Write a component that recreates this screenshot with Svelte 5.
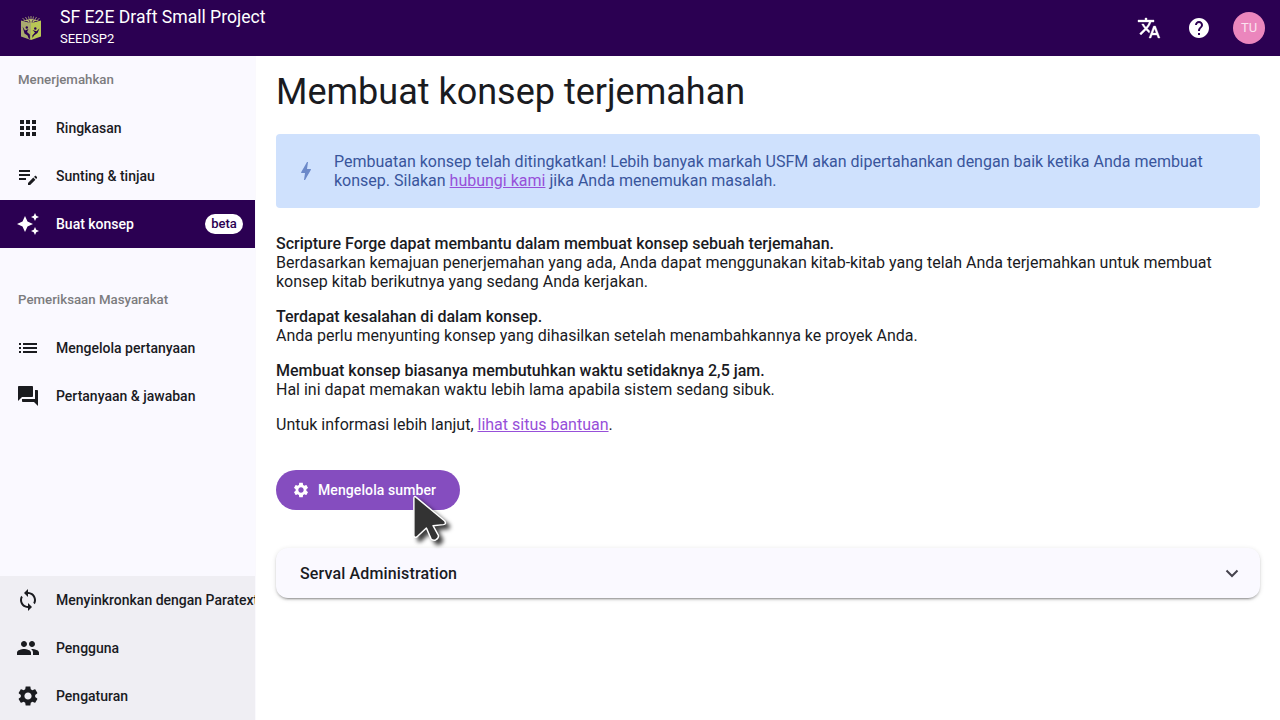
<script>
  const icons = {
    apps: 'M4 8h4V4H4v4zm6 12h4v-4h-4v4zm-6 0h4v-4H4v4zm0-6h4v-4H4v4zm6 0h4v-4h-4v4zm6-10v4h4V4h-4zm-6 4h4V4h-4v4zm6 6h4v-4h-4v4zm0 6h4v-4h-4v4z',
    editNote: 'M3 10h11v2H3v-2zm0-2h11V6H3v2zm0 8h7v-2H3v2zm15.01-3.13.71-.71c.39-.39 1.02-.39 1.41 0l.71.71c.39.39.39 1.02 0 1.41l-.71.71-2.12-2.12zm-.71.71-5.3 5.3V21h2.12l5.3-5.3-2.12-2.12z',
    sparkle: 'M19 9l1.25-2.75L23 5l-2.75-1.25L19 1l-1.25 2.75L15 5l2.75 1.25L19 9zm-7.5.5L9 4 6.5 9.5 1 12l5.5 2.5L9 20l2.5-5.5L17 12l-5.5-2.5zM19 15l-1.25 2.75L15 19l2.75 1.25L19 23l1.25-2.75L23 19l-2.75-1.25L19 15z',
    list: 'M3 13h2v-2H3v2zm0 4h2v-2H3v2zm0-8h2V7H3v2zm4 4h14v-2H7v2zm0 4h14v-2H7v2zM7 7v2h14V7H7z',
    forum: 'M21 6h-2v9H6v2c0 .55.45 1 1 1h11l4 4V7c0-.55-.45-1-1-1zm-4 6V3c0-.55-.45-1-1-1H3c-.55 0-1 .45-1 1v14l4-4h10c.55 0 1-.45 1-1z',
    sync: 'M12 4V1L8 5l4 4V6c3.31 0 6 2.69 6 6 0 1.01-.25 1.97-.7 2.8l1.46 1.46C19.54 15.03 20 13.57 20 12c0-4.42-3.58-8-8-8zm0 14c-3.31 0-6-2.69-6-6 0-1.01.25-1.97.7-2.8L5.24 7.74C4.46 8.97 4 10.43 4 12c0 4.42 3.58 8 8 8v3l4-4-4-4v3z',
    people: 'M16 11c1.66 0 2.99-1.34 2.99-3S17.66 5 16 5c-1.66 0-3 1.34-3 3s1.34 3 3 3zm-8 0c1.66 0 2.99-1.34 2.99-3S9.66 5 8 5C6.34 5 5 6.34 5 8s1.34 3 3 3zm0 2c-2.33 0-7 1.17-7 3.5V19h14v-2.5c0-2.33-4.67-3.5-7-3.5zm8 0c-.29 0-.62.02-.97.05 1.16.84 1.97 1.97 1.97 3.45V19h6v-2.5c0-2.33-4.67-3.5-7-3.5z',
    settings: 'M19.14 12.94c.04-.3.06-.61.06-.94 0-.32-.02-.64-.07-.94l2.03-1.58c.18-.14.23-.41.12-.61l-1.92-3.32c-.12-.22-.37-.29-.59-.22l-2.39.96c-.5-.38-1.03-.7-1.62-.94l-.36-2.54c-.04-.24-.24-.41-.48-.41h-3.84c-.24 0-.43.17-.47.41l-.36 2.54c-.59.24-1.13.57-1.62.94l-2.39-.96c-.22-.08-.47 0-.59.22L2.74 8.87c-.12.21-.08.47.12.61l2.03 1.58c-.05.3-.09.63-.09.94s.02.64.07.94l-2.03 1.58c-.18.14-.23.41-.12.61l1.92 3.32c.12.22.37.29.59.22l2.39-.96c.5.38 1.03.7 1.62.94l.36 2.54c.05.24.24.41.48.41h3.84c.24 0 .44-.17.47-.41l.36-2.54c.59-.24 1.13-.56 1.62-.94l2.39.96c.22.08.47 0 .59-.22l1.92-3.32c.12-.22.07-.47-.12-.61l-2.01-1.58zM12 15.6c-1.98 0-3.6-1.62-3.6-3.6s1.62-3.6 3.6-3.6 3.6 1.62 3.6 3.6-1.62 3.6-3.6 3.6z',
    translate: 'M12.87 15.07l-2.54-2.51.03-.03c1.74-1.94 2.98-4.17 3.71-6.53H17V4h-7V2H8v2H1v1.99h11.17C11.5 7.92 10.44 9.75 9 11.35 8.07 10.32 7.3 9.19 6.69 8h-2c.73 1.63 1.73 3.17 2.98 4.56l-5.09 5.02L4 19l5-5 3.11 3.11.76-2.04zM18.5 10h-2L12 22h2l1.12-3h4.75L21 22h2l-4.5-12zm-2.62 7l1.62-4.33L19.12 17h-3.24z',
    help: 'M12 2C6.48 2 2 6.48 2 12s4.48 10 10 10 10-4.48 10-10S17.52 2 12 2zm1 17h-2v-2h2v2zm2.07-7.75l-.9.92C13.45 12.9 13 13.5 13 15h-2v-.5c0-1.1.45-2.1 1.17-2.83l1.24-1.26c.37-.36.59-.86.59-1.41 0-1.1-.9-2-2-2s-2 .9-2 2H8c0-2.21 1.79-4 4-4s4 1.79 4 4c0 .88-.36 1.68-.93 2.25z',
    bolt: 'M11 21h-1l1-7H7.5c-.58 0-.57-.32-.38-.66.19-.34.05-.08.07-.12C8.48 10.94 10.42 7.54 13 3h1l-1 7h3.5c.49 0 .56.33.47.51l-.07.15C12.96 17.55 11 21 11 21z'
  };
  const translating = [
    { icon: 'apps', label: 'Ringkasan' },
    { icon: 'editNote', label: 'Sunting & tinjau' },
    { icon: 'sparkle', label: 'Buat konsep', active: true, badge: 'beta' }
  ];
  const checking = [
    { icon: 'list', label: 'Mengelola pertanyaan' },
    { icon: 'forum', label: 'Pertanyaan & jawaban' }
  ];
  const admin = [
    { icon: 'sync', label: 'Menyinkronkan dengan Paratext' },
    { icon: 'people', label: 'Pengguna' },
    { icon: 'settings', label: 'Pengaturan' }
  ];
</script>

{#snippet icon(name, size = 24)}
  <svg class="icon {name}" width={size} height={size} viewBox="0 0 24 24" fill="currentColor" aria-hidden="true"><path d={icons[name]} /></svg>
{/snippet}

{#snippet navItem(item)}
  <div class="item" class:active={item.active}>
    {@render icon(item.icon)}
    <span class="label">{item.label}</span>
    {#if item.badge}<span class="badge">{item.badge}</span>{/if}
  </div>
{/snippet}

<div class="app">
  <header>
    <svg class="logo" width="22" height="26" viewBox="0 0 22 26" aria-hidden="true">
      <path fill="#a9a96f" d="M1 5.500 11 8V25L1 21.500Z" />
      <path fill="#b9c755" d="M11 8 21 5.500V21.500L11 25Z" />
      <path fill="#b5ba6b" d="M3 5.500 11 4l8 1.500-8 2.500Z" />
      <path fill="none" stroke="#c8ca83" stroke-width=".7" d="M2.500 3l2.500 2.500M5.500 2l2 3.500M8.500 1.500l1 4M11 1v5M13.500 1.500l-1 4M16.500 2l-2 3.500M19.500 3 17 5.500" />
      <path fill="none" stroke="#2b0052" stroke-width=".7" d="M5 6.200l3 .6M9 5l1 2M13 5l-1 2M17 6.200l-3 .6" />
      <path fill="#2b0052" d="M2.500 11.500 5 15.500 8.500 14 7 17 9.800 19.500 10 24 8.700 23.500 7.500 20.500 4.500 18.500ZM19.500 13.500 17.500 18 14 20.500 12.500 23 12.300 20.500 15 17.500 12.500 15 16.500 16.300Z" />
      <circle cx="6.800" cy="12.500" r="1.200" fill="#2b0052" /><circle cx="15.300" cy="13.500" r="1.200" fill="#2b0052" />
    </svg>
    <div class="project">
      <div class="name">SF E2E Draft Small Project</div>
      <div class="short">SEEDSP2</div>
    </div>
    <div class="actions">
      {@render icon('translate')}
      {@render icon('help')}
      <div class="avatar">TU</div>
    </div>
  </header>

  <div class="body">
    <nav>
      <div class="heading">Menerjemahkan</div>
      {#each translating as item}{@render navItem(item)}{/each}
      <div class="heading second">Pemeriksaan Masyarakat</div>
      {#each checking as item}{@render navItem(item)}{/each}
      <div class="admin">
        {#each admin as item}{@render navItem(item)}{/each}
      </div>
    </nav>

    <main>
      <h1>Membuat konsep terjemahan</h1>
      <div class="notice">
        {@render icon('bolt')}
        <div>Pembuatan konsep telah ditingkatkan! Lebih banyak markah USFM akan dipertahankan dengan baik ketika Anda membuat konsep. Silakan <a href="#contact">hubungi kami</a> jika Anda menemukan masalah.</div>
      </div>
      <p><strong>Scripture Forge dapat membantu dalam membuat konsep sebuah terjemahan.</strong><br />Berdasarkan kemajuan penerjemahan yang ada, Anda dapat menggunakan kitab-kitab yang telah Anda terjemahkan untuk membuat konsep kitab berikutnya yang sedang Anda kerjakan.</p>
      <p><strong>Terdapat kesalahan di dalam konsep.</strong><br />Anda perlu menyunting konsep yang dihasilkan setelah menambahkannya ke proyek Anda.</p>
      <p><strong>Membuat konsep biasanya membutuhkan waktu setidaknya 2,5 jam.</strong><br />Hal ini dapat memakan waktu lebih lama apabila sistem sedang sibuk.</p>
      <p>Untuk informasi lebih lanjut, <a href="#help">lihat situs bantuan</a>.</p>
      <button>
        {@render icon('settings', 18)}
        <span>Mengelola sumber</span>
        <svg class="cursor" width="46" height="58" viewBox="0 0 44 56" aria-hidden="true">
          <path d="M4.500 6.200Q4.500 3.200 6.800 5.200L34.300 28Q36.200 31 33 31.500L23 32.500 28.300 42.200Q28.500 44.800 25.500 46.300 22.400 47.300 21 45L16.600 34.800 7.300 43.500Q4.500 44.500 4.500 41.500Z" fill="#333" stroke="#fff" stroke-width="1.400" stroke-linejoin="round" />
        </svg>
      </button>
      <div class="panel">
        <span>Serval Administration</span>
        <svg width="14" height="9" viewBox="0 0 14 9" aria-hidden="true"><path d="M1.500 1.500 7 7l5.500-5.500" fill="none" stroke="#45434d" stroke-width="2" /></svg>
      </div>
    </main>
  </div>
</div>

<style>
  :global(body) { margin: 0; }
  .app { width: 1280px; height: 720px; overflow: hidden; display: flex; flex-direction: column; background: #fff; color: #1a1b1f; font: 16px/19px Roboto, sans-serif; }
  .icon { flex: none; display: block; }
  .translate { stroke: currentColor; stroke-width: .35; }
  header { height: 56px; flex: none; box-sizing: border-box; background: #2b0052; color: #fff; display: flex; align-items: center; padding: 0 15px 0 20px; }
  .project { margin-left: 18px; padding-bottom: 2px; }
  .name { font-size: 17.6px; line-height: 24px; margin-top: -1px; }
  .short { font-size: 13px; line-height: 20px; }
  .actions { margin-left: auto; display: flex; align-items: center; gap: 26px; }
  .avatar { width: 32px; height: 32px; border-radius: 50%; background: #eb86bd; font-size: 13px; line-height: 32px; text-align: center; color: #fbe3f0; margin-left: -4px; }
  .body { flex: 1; min-height: 0; display: flex; }
  nav { width: 255px; flex: none; border-right: 1px solid #faf9fd; background: #faf9ff; display: flex; flex-direction: column; overflow: hidden; font-size: 14px; font-weight: 500; }
  .heading { height: 48px; flex: none; padding-left: 18px; line-height: 47px; font-size: 13.28px; color: #7c7c7e; }
  .second { margin-top: 28px; }
  .item { height: 48px; flex: none; box-sizing: border-box; display: flex; align-items: center; padding: 0 12px 0 16px; gap: 16px; white-space: nowrap; }
  .active { background: #2b0052; color: #fff; }
  .badge { margin-left: auto; width: 38px; height: 20px; border-radius: 10px; background: #fff; color: #2b0052; font-size: 13px; line-height: 20px; text-align: center; }
  .admin { margin-top: auto; background: #efeef3; }
  main { flex: 1; padding: 11px 20px; min-width: 0; }
  h1 { margin: 0 0 17px; font-size: 36px; line-height: 50px; font-weight: 400; }
  .notice { display: flex; align-items: center; height: 74px; box-sizing: border-box; padding: 0 28px 0 18px; gap: 16px; border-radius: 4px; background: #cfe1fd; color: #39559c; margin-bottom: 26px; }
  .notice .icon { color: #6c89c9; }
  a { color: #974fd9; text-decoration: underline; }
  p { margin: 0 0 16px; }
  strong { font-weight: 500; }
  button { position: relative; display: flex; align-items: center; width: 184px; height: 40px; box-sizing: border-box; margin: 36px 0 38px; padding: 0 16px; gap: 8px; border: 0; border-radius: 20px; background: #854dbf; color: #fff; font: 500 14px/20px Roboto, sans-serif; letter-spacing: .096px; white-space: nowrap; }
  .cursor { position: absolute; left: 133px; top: 22px; overflow: visible; filter: drop-shadow(4px 4px 2px rgba(0, 0, 0, .75)); }
  .panel { display: flex; align-items: center; justify-content: space-between; height: 50px; box-sizing: border-box; padding: 0 21px 0 24px; border-radius: 12px; background: #faf9ff; font-weight: 500; letter-spacing: .144px; box-shadow: 0 3px 1px -2px rgba(0, 0, 0, .2), 0 2px 2px rgba(0, 0, 0, .14), 0 1px 5px rgba(0, 0, 0, .12); }
</style>
